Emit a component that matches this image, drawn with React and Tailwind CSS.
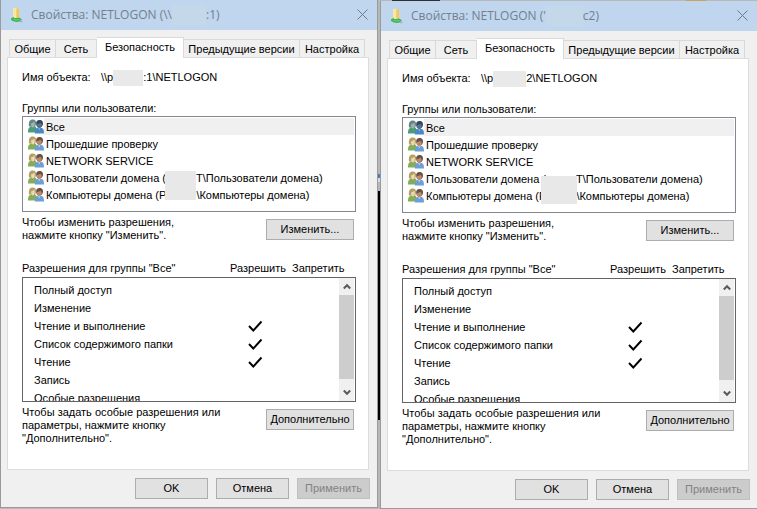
import clsx from 'clsx'

const TABS = ['Общие', 'Сеть', 'Безопасность', 'Предыдущие версии', 'Настройка']
const TAB_WIDTHS = ['w-[47px]', 'w-[41px]', 'w-[87px]', 'w-[116px]', 'w-[65px]']

const GROUPS = [
  ['Все'],
  ['Прошедшие проверку'],
  ['NETWORK SERVICE'],
  ['Пользователи домена (', 'w-[30px]', 'T\\Пользователи домена)'],
  ['Компьютеры домена (P', 'w-[30px]', '\\Компьютеры домена)'],
]

const PERMISSIONS = [
  { name: 'Полный доступ', allow: false },
  { name: 'Изменение', allow: false },
  { name: 'Чтение и выполнение', allow: true },
  { name: 'Список содержимого папки', allow: true },
  { name: 'Чтение', allow: true },
  { name: 'Запись', allow: false },
  { name: 'Особые разрешения', allow: false },
]

function FolderIcon() {
  return (
    <svg width="14" height="16" viewBox="0 0 14 16" aria-hidden="true">
      <path d="M3 1h5l1 1v11l-2 .5L3 12z" fill="#f3d06c" />
      <path d="M3 1h3.500v12L3 12z" fill="#fbe6a0" />
      <path d="M6.500 2L9 1.500V13l-2.500.5z" fill="#f0c862" />
      <path d="M1 11.500l3-1.800v1.300h3.500L9 10.500l3 1.800-2.500 2.200-3 .5-3-.8L1 13z" fill="#3cb553" />
      <path d="M3.500 12.200l3 .8 3-.6" fill="none" stroke="#7fd68b" strokeWidth=".8" />
      <path d="M10 13.500h2.500v1.800H10z" fill="#a4b3c2" />
    </svg>
  )
}

function GroupIcon({ teal }) {
  return (
    <svg className="shrink-0" width="16" height="15" viewBox="0 0 16 15" aria-hidden="true">
      {/* person behind, on the left */}
      <path d="M0 13.500C-.2 9.500 1.200 8 3.500 7.600h3C8.500 8 9 10 9 13.500z" fill={teal ? '#4f9b78' : '#85ad58'} />
      <path d="M1 7.500C.3 3 1.600.6 4.800.6c2.600 0 3.500 1.800 3.200 4.400L7 8z" fill={teal ? '#64878a' : '#b5a064'} />
      <path d="M3 4.500C4.500 4.300 5.500 3.500 6 2.600c1.200 1 1.300 5-.8 6C3.700 8.600 3 6.500 3 4.500z" fill={teal ? '#a3b5ad' : '#ecd9b3'} />
      {/* person in front, on the right */}
      <path d="M6.800 14.500c-.2-4 1-5.400 3.400-5.700h2.800c2.200.4 3 2 3 5.700z" fill={teal ? '#4888c4' : '#6b9fd6'} />
      <path d="M8.200 5.500C7.700 2.500 9 .9 11.500.9c2.600 0 4 1.800 3.300 5L13.500 8H9z" fill={teal ? '#30475f' : '#6a5043'} />
      <path d="M8.700 5c1.400 0 2.600-.4 3.400-1.200.8.5 1.400 1 1.700 1.700-.1 2-.9 3.900-2.400 3.900S8.700 7.500 8.700 5z" fill={teal ? '#55738f' : '#b98b6b'} />
      <path d="M10 9.200l1.300 2 1.200-2z" fill={teal ? '#8fb8de' : '#c3daf0'} />
    </svg>
  )
}

function CheckMark() {
  return (
    <svg width="15" height="13" viewBox="0 0 15 13" fill="none" aria-hidden="true">
      <path d="M1 6l4.300 4.500L13.500 1.500" stroke="#000" strokeWidth="1.900" />
    </svg>
  )
}

function ScrollArrow({ down }) {
  return (
    <button type="button" aria-label={down ? 'Вниз' : 'Вверх'} className="flex h-[17px] w-full items-center justify-center">
      <svg className={clsx(down && 'rotate-180')} width="8" height="7" viewBox="0 0 8 7" fill="none">
        <path d="M.8 5.500L4 2.200l3.200 3.300" stroke="#5a5a5a" strokeWidth="2" />
      </svg>
    </button>
  )
}

function PushButton({ children, wide, disabled }) {
  return (
    <button
      type="button"
      disabled={disabled}
      className={clsx(
        'h-[21px] shrink-0 border text-center',
        wide ? 'w-[88px]' : 'w-[73px]',
        disabled ? 'border-[#bfbfbf] bg-[#cccccc] text-[#838383]' : 'border-[#adadad] bg-[#e1e1e1]',
      )}
    >
      {children}
    </button>
  )
}

// Grey patch over a hidden host name
function Cover({ className }) {
  return <span className={clsx('inline-block shrink-0', className)} />
}

function GroupList({ coverClass }) {
  return (
    <ul className="relative h-24 border border-[#828790] bg-white px-px pt-px">
      {GROUPS.map(([before, gap, after], i) => (
        <li key={before} className="flex h-[17px] items-center pl-1">
          <GroupIcon teal={i === 0} />
          <span
            className={clsx(
              'flex h-full flex-1 items-center pt-px pl-0.5 whitespace-pre',
              i === 0 && 'bg-[#f0f0f0]',
            )}
          >
            {before}
            {gap && <Cover className={gap} />}
            {after}
          </span>
        </li>
      ))}
      <li aria-hidden="true" className={clsx('absolute bg-[#e8e8e8]', coverClass)} />
    </ul>
  )
}

function PermissionTable() {
  return (
    <div className="flex h-[125px] overflow-hidden border border-[#646464]">
      <table className="flex-1 self-start">
        <tbody className="block pt-[3px]">
          {PERMISSIONS.map(({ name, allow }) => (
            <tr key={name} className="flex h-[18px] items-center pl-[11px]">
              <th scope="row" className="flex-1 text-left font-normal">{name}</th>
              <td className="w-[91px]">{allow && <CheckMark />}</td>
            </tr>
          ))}
        </tbody>
      </table>
      <div className="mr-px flex w-[15px] flex-col bg-[#f0f0f0]">
        <ScrollArrow />
        <div className="h-[84px] bg-[#cdcdcd]" />
        <div className="flex-1" />
        <ScrollArrow down />
      </div>
    </div>
  )
}

function PropertiesDialog({ title, objectName, coverClass }) {
  return (
    <section className="flex flex-col border-x border-b border-[#9a9a9a] bg-[#f0f0f0]">
      <header className="flex h-[30px] items-center bg-[#bfd6ee] pl-[9px] text-[#747f8c]">
        <FolderIcon />
        <h1 className="ml-[7px] flex flex-1 items-center font-['Open_Sans',sans-serif] text-xs whitespace-pre">{title}</h1>
        <button type="button" aria-label="Закрыть" className="flex w-[30px] justify-center pb-0.5">
          <svg width="11" height="11" viewBox="0 0 11 11" stroke="#6f7b88" fill="none">
            <path d="M.5.5l10 10M10.500.5l-10 10" />
          </svg>
        </button>
      </header>

      <nav role="tablist" className="mt-[7px] flex h-5 items-end pl-2">
        {TABS.map((tab, i) => (
          <button
            key={tab}
            type="button"
            role="tab"
            aria-selected={i === 2}
            className={clsx(
              'shrink-0 border-t border-r border-[#d9d9d9] whitespace-nowrap',
              TAB_WIDTHS[i],
              i === 0 && 'border-l',
              i === 2 ? 'z-10 -mb-px h-[21px] bg-white pb-0.5' : 'h-[18px] pt-px',
            )}
          >
            {tab}
          </button>
        ))}
      </nav>

      <div className="mr-2 ml-1.5 h-[413px] border border-[#dcdcdc] bg-white pr-3 pl-3.5">
        <p className="flex h-[39px] items-center whitespace-pre">
          <span className="w-[79px]">Имя объекта:</span>
          {objectName}
        </p>
        <h2 className="flex h-[19px] items-end">Группы или пользователи:</h2>
        <GroupList coverClass={coverClass} />

        <div className="flex justify-between pt-1 pr-0.5">
          <p className="leading-[13px]">Чтобы изменить разрешения,<br />нажмите кнопку "Изменить".</p>
          <div className="pt-[3px]"><PushButton wide>Изменить...</PushButton></div>
        </div>

        <div className="mt-[18px] flex h-[17px] items-start leading-4">
          <h2 className="flex-1">Разрешения для группы "Все"</h2>
          <span className="w-[62px]">Разрешить</span>
          <span className="w-16">Запретить</span>
        </div>
        <PermissionTable />

        <div className="flex justify-between pt-1 pr-0.5">
          <p className="leading-[13px]">
            Чтобы задать особые разрешения или<br />параметры, нажмите кнопку<br />"Дополнительно".
          </p>
          <div className="pt-[3px]"><PushButton wide>Дополнительно</PushButton></div>
        </div>
      </div>

      <footer className="flex h-[37px] items-center justify-end gap-2 pr-[7px]">
        <PushButton>OK</PushButton>
        <PushButton>Отмена</PushButton>
        <PushButton disabled>Применить</PushButton>
      </footer>
    </section>
  )
}

export default function App() {
  return (
    <div className="overflow-hidden">
      <main className="-mr-px grid min-h-screen grid-cols-[1fr_2px_1fr] bg-[#b8b8b8] font-['Liberation_Sans',sans-serif] text-[11px] text-black">
        <div>
          <PropertiesDialog
            title={<>Свойства: NETLOGON (\\<Cover className="h-5 w-[34px] bg-[#c5d8ea]" />:1)</>}
            objectName={<>\\p<Cover className="h-4 w-[30px] bg-[#e9e9e9]" />:1\NETLOGON</>}
            coverClass="left-[142px] top-[54px] h-[29px] w-[31px]"
          />
        </div>

        {/* desktop showing between the two windows */}
        <div className="flex flex-col">
          <div className="h-[174px]" />
          <div className="h-1 bg-[#4a7ac0]" />
          <div className="h-1 bg-[#d5dbe2]" />
          <div className="h-[9px]" />
          <div className="h-[229px] bg-black" />
        </div>

        <div>
          {/* desktop showing above the second window */}
          <div className="flex h-px">
            <div className="w-3" />
            <div className="w-12 bg-[#2e2e34]" />
            <div className="flex-1" />
            <div className="w-5 bg-[#c9a35c]" />
            <div className="w-[52px]" />
          </div>
          <PropertiesDialog
            title={<>Свойства: NETLOGON ('<Cover className="h-5 w-[37px] bg-[#c5d8ea]" />c2)</>}
            objectName={<>\\p<Cover className="h-4 w-[33px] bg-[#e9e9e9]" />2\NETLOGON</>}
            coverClass="left-[138px] top-[58px] h-7 w-9"
          />
        </div>
      </main>
    </div>
  )
}
